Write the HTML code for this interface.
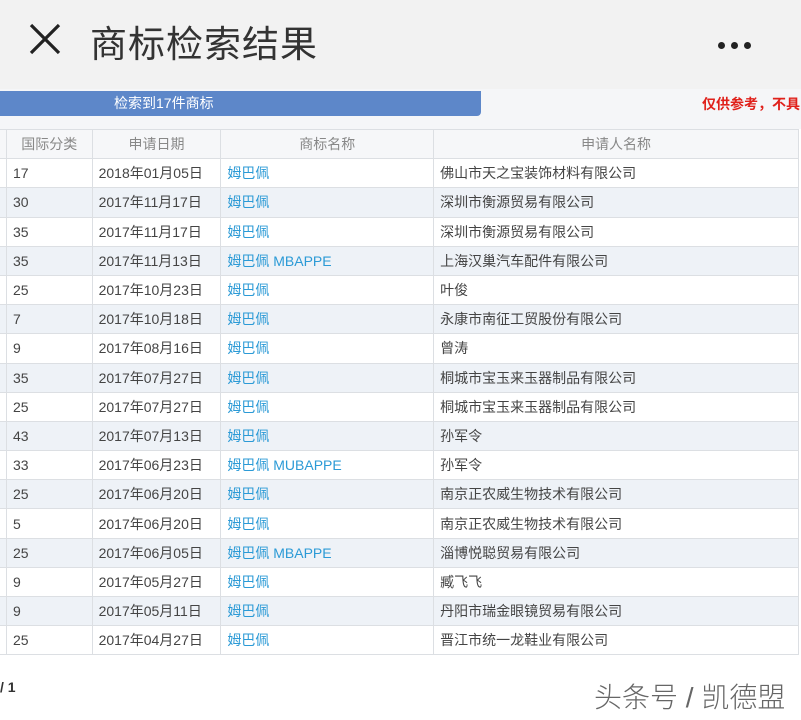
<!DOCTYPE html>
<html><head><meta charset="utf-8"><style>
*{margin:0;padding:0;box-sizing:border-box}
body{width:801px;height:720px;overflow:hidden;background:#fff;font-family:"Liberation Sans","Noto Sans CJK SC",sans-serif;position:relative}
.hdr{position:absolute;left:0;top:0;width:801px;height:89px;background:#f2f2f2}
.title{position:absolute;left:90px;top:14px;font-size:37px;color:#333;letter-spacing:1px}
.x{position:absolute;left:28px;top:22px}
.dots{position:absolute;left:718px;top:36px}
.dots i{display:inline-block;width:7px;height:7px;border-radius:50%;background:#222;margin-right:6px}
.band{position:absolute;left:0;top:89px;width:801px;height:40px;background:#f5f6f8}
.bar{position:absolute;left:0;top:91px;width:481px;height:25px;background:#5d87c9;border-radius:0 0 4px 0;color:#fff;font-size:14px;line-height:25px;padding-left:114px}
.red{position:absolute;left:702px;top:94px;color:#e0211b;font-size:14px;font-weight:bold;white-space:nowrap}
table{position:absolute;left:-2px;top:129px;border-collapse:collapse;font-size:14px;color:#444}
td,th{border:1px solid #dcdfe3;height:29.2px;padding:0 0 0 6px;white-space:nowrap;font-weight:normal;text-align:left}
th{color:#888;text-align:center;padding:0;background:#f6f7f9}
tr:nth-child(odd) td{background:#eef2f7}
td.b{color:#2b9ad6}
.pg{position:absolute;left:0;top:679px;font-size:14px;color:#333;font-weight:bold}
.wm{position:absolute;left:594px;top:676px;font-size:28px;color:#666;font-weight:300}
</style></head><body>
<div class="hdr"></div>
<svg class="x" width="34" height="34" viewBox="0 0 34 34"><path d="M3 3L31 31M31 3L3 31" stroke="#222" stroke-width="3.2"/></svg>
<div class="title">商标检索结果</div>
<div class="dots"><i></i><i></i><i></i></div>
<div class="band"></div>
<div class="bar">检索到17件商标</div>
<div class="red">仅供参考，不具</div>
<table>
<tr><th style="width:8px"></th><th style="width:86px">国际分类</th><th style="width:129px">申请日期</th><th style="width:214px">商标名称</th><th style="width:367px">申请人名称</th></tr>
<tr><td></td><td>17</td><td>2018年01月05日</td><td class="b">姆巴佩</td><td>佛山市天之宝装饰材料有限公司</td></tr>
<tr><td></td><td>30</td><td>2017年11月17日</td><td class="b">姆巴佩</td><td>深圳市衡源贸易有限公司</td></tr>
<tr><td></td><td>35</td><td>2017年11月17日</td><td class="b">姆巴佩</td><td>深圳市衡源贸易有限公司</td></tr>
<tr><td></td><td>35</td><td>2017年11月13日</td><td class="b">姆巴佩 MBAPPE</td><td>上海汉巢汽车配件有限公司</td></tr>
<tr><td></td><td>25</td><td>2017年10月23日</td><td class="b">姆巴佩</td><td>叶俊</td></tr>
<tr><td></td><td>7</td><td>2017年10月18日</td><td class="b">姆巴佩</td><td>永康市南征工贸股份有限公司</td></tr>
<tr><td></td><td>9</td><td>2017年08月16日</td><td class="b">姆巴佩</td><td>曾涛</td></tr>
<tr><td></td><td>35</td><td>2017年07月27日</td><td class="b">姆巴佩</td><td>桐城市宝玉来玉器制品有限公司</td></tr>
<tr><td></td><td>25</td><td>2017年07月27日</td><td class="b">姆巴佩</td><td>桐城市宝玉来玉器制品有限公司</td></tr>
<tr><td></td><td>43</td><td>2017年07月13日</td><td class="b">姆巴佩</td><td>孙军令</td></tr>
<tr><td></td><td>33</td><td>2017年06月23日</td><td class="b">姆巴佩 MUBAPPE</td><td>孙军令</td></tr>
<tr><td></td><td>25</td><td>2017年06月20日</td><td class="b">姆巴佩</td><td>南京正农威生物技术有限公司</td></tr>
<tr><td></td><td>5</td><td>2017年06月20日</td><td class="b">姆巴佩</td><td>南京正农威生物技术有限公司</td></tr>
<tr><td></td><td>25</td><td>2017年06月05日</td><td class="b">姆巴佩 MBAPPE</td><td>淄博悦聪贸易有限公司</td></tr>
<tr><td></td><td>9</td><td>2017年05月27日</td><td class="b">姆巴佩</td><td>臧飞飞</td></tr>
<tr><td></td><td>9</td><td>2017年05月11日</td><td class="b">姆巴佩</td><td>丹阳市瑞金眼镜贸易有限公司</td></tr>
<tr><td></td><td>25</td><td>2017年04月27日</td><td class="b">姆巴佩</td><td>晋江市统一龙鞋业有限公司</td></tr>
</table>
<div class="pg">/ 1</div>
<div class="wm">头条号 / 凯德盟</div>
</body></html>
